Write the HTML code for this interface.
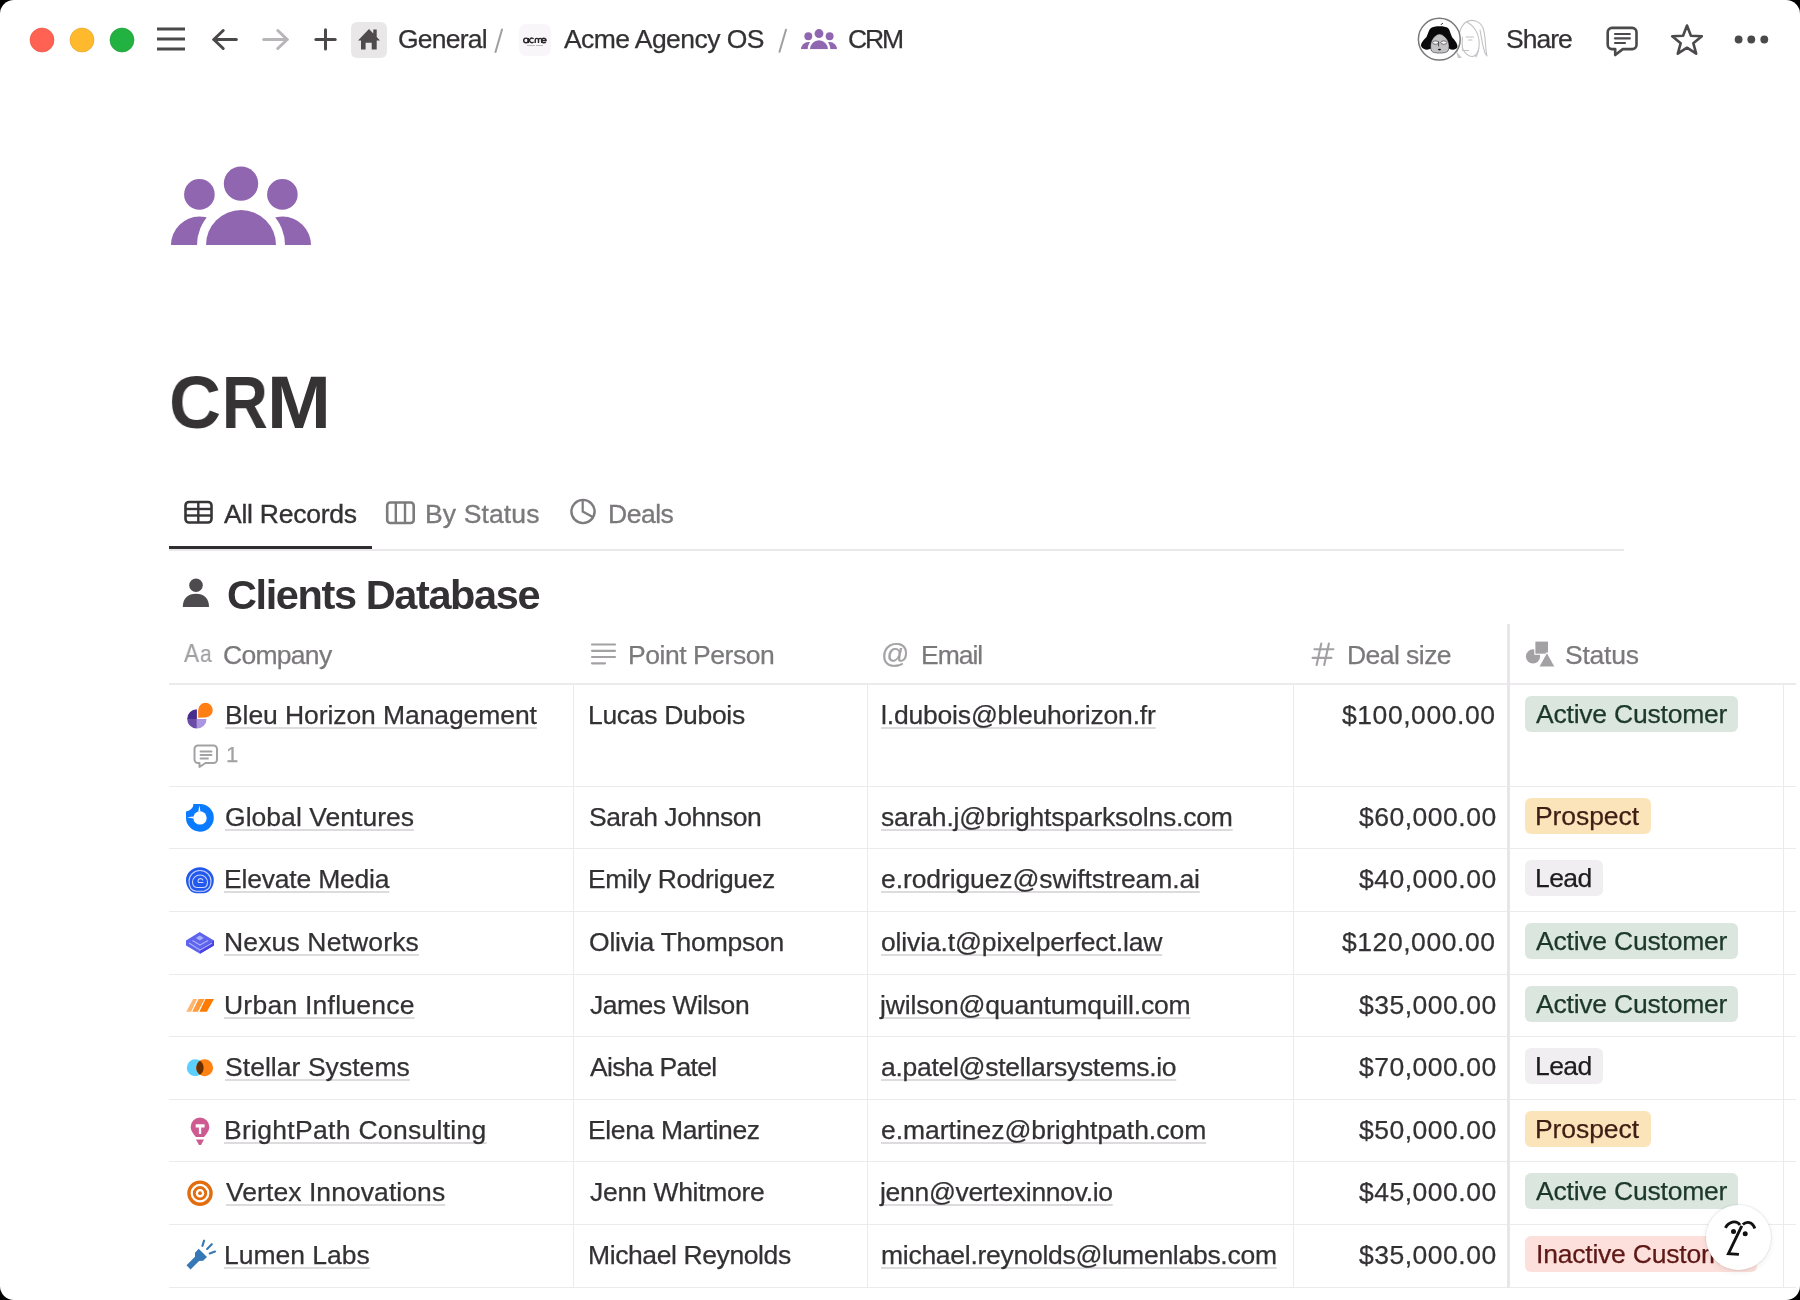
<!DOCTYPE html>
<html><head><meta charset="utf-8"><title>CRM</title>
<style>
html,body{margin:0;padding:0;background:#000;width:1800px;height:1300px;overflow:hidden}
#win{position:absolute;left:0;top:0;width:1800px;height:1300px;background:#fff;border-radius:14px;overflow:hidden}
.t{position:absolute;white-space:nowrap;font-family:"Liberation Sans",sans-serif;will-change:transform}
.u{text-decoration:underline;text-decoration-color:#DDDBDE;text-decoration-thickness:1.5px;text-underline-offset:2.8px;text-decoration-skip-ink:none}
.pill{position:absolute;height:36px;border-radius:6px;font-family:"Liberation Sans",sans-serif;font-size:26.5px;line-height:36px;padding:0 11px;white-space:nowrap}
svg{overflow:visible}
</style></head>
<body><div id="win">
<svg style="position:absolute;left:29px;top:27px;" width="26" height="26" viewBox="0 0 26 26"><circle cx="13" cy="13" r="12" fill="#FF6152" stroke="#E9503F" stroke-width="0.6"/></svg>
<svg style="position:absolute;left:69px;top:27px;" width="26" height="26" viewBox="0 0 26 26"><circle cx="13" cy="13" r="12" fill="#FEBA2C" stroke="#E3A123" stroke-width="0.6"/></svg>
<svg style="position:absolute;left:109px;top:27px;" width="26" height="26" viewBox="0 0 26 26"><circle cx="13" cy="13" r="12" fill="#21B242" stroke="#1A9A36" stroke-width="0.6"/></svg>
<svg style="position:absolute;left:155px;top:25px;" width="34" height="30" viewBox="0 0 34 30"><g stroke="#4A484A" stroke-width="3"><line x1="2" y1="4" x2="30" y2="4"/><line x1="2" y1="14" x2="30" y2="14"/><line x1="2" y1="24" x2="30" y2="24"/></g></svg>
<svg style="position:absolute;left:205px;top:25px;" width="40" height="30" viewBox="0 0 40 30"><g stroke="#4B4849" stroke-width="3" fill="none" stroke-linecap="round" stroke-linejoin="round"><path d="M9 14.5 H31.3"/><path d="M18.2 5.5 L8.8 14.5 L18.2 23.5"/></g></svg>
<svg style="position:absolute;left:255px;top:25px;" width="40" height="30" viewBox="0 0 40 30"><g stroke="#B7B5B7" stroke-width="3" fill="none" stroke-linecap="round" stroke-linejoin="round"><path d="M8.7 14.5 H32"/><path d="M22.8 5.5 L32.2 14.5 L22.8 23.5"/></g></svg>
<svg style="position:absolute;left:310px;top:24px;" width="32" height="32" viewBox="0 0 32 32"><g stroke="#4B4849" stroke-width="3" stroke-linecap="round"><path d="M15.5 5.8 V25.1"/><path d="M5.9 15.5 H25.2"/></g></svg>
<div style="position:absolute;left:351px;top:22px;width:36px;height:36px;background:#EAE7E8;border-radius:6px"></div>
<svg style="position:absolute;left:351px;top:22px;" width="36" height="36" viewBox="0 0 36 36"><path fill="#4F4B4C" d="M18 7 L7 18.5 H10 V27.5 H14.6 V20.8 H20.7 V27.5 H25.7 V18.5 H29 L25.7 15 V7.5 H22.3 V11.5 Z"/></svg>
<div id="t0" class="t " style="left:398.20px;top:25.57px;font-size:26.5px;line-height:26.5px;color:#333133;font-weight:400;;-webkit-text-stroke:0.25px #333133;letter-spacing:-0.769px;">General</div>
<svg style="position:absolute;left:490px;top:25px;" width="16" height="32" viewBox="0 0 16 32"><path d="M12 4.5 L5.5 27" stroke="#A09EA0" stroke-width="2" stroke-linecap="round"/></svg>
<div style="position:absolute;left:519px;top:24px;width:32px;height:32px;background:#F8F6F9;border-radius:7px"></div>
<svg style="position:absolute;left:519px;top:24px" width="32" height="32" viewBox="519 24 32 32"><g fill="none" stroke="#2A282A" stroke-width="1.45"><circle cx="526" cy="40.4" r="2.3"/><path d="M528.3 38 V43.1"/><path d="M533.6 38.9 A2.3 2.3 0 1 0 533.6 41.9"/><path d="M535.2 43.1 V40 A1.65 1.65 0 0 1 538.5 40 V43.1 M538.5 40 A1.65 1.65 0 0 1 541.8 40 V43.1"/><path d="M545.4 41.8 A2.3 2.3 0 1 1 545.8 40.4 H541.7" transform="translate(0.3 0)"/></g></svg>
<div style="position:absolute;left:527px;top:44.5px;width:8px;height:1px;background:#BDBBBD;"></div>
<div style="position:absolute;left:536px;top:44.5px;width:7px;height:1px;background:#BDBBBD;"></div>
<div id="t1" class="t " style="left:564.20px;top:25.57px;font-size:26.5px;line-height:26.5px;color:#333133;font-weight:400;;-webkit-text-stroke:0.25px #333133;letter-spacing:-0.563px;">Acme Agency OS</div>
<svg style="position:absolute;left:775px;top:25px;" width="16" height="32" viewBox="0 0 16 32"><path d="M11 4.7 L4.5 26.7" stroke="#A09EA0" stroke-width="2" stroke-linecap="round"/></svg>
<svg style="position:absolute;left:801px;top:29px;" width="37" height="22" viewBox="0 0 37 22"><g transform="scale(0.257)"><circle cx="28.4" cy="28.4" r="15.3" fill="#9166B0"/><circle cx="111.4" cy="28.4" r="15.3" fill="#9166B0"/><circle cx="70" cy="17.6" r="17.2" fill="#9166B0"/><path d="M0 79 A28.4 28.4 0 0 1 56.8 79 Z" fill="#9166B0"/><path d="M83.2 79 A28.4 28.4 0 0 1 140 79 Z" fill="#9166B0"/><circle cx="70" cy="79" r="44" fill="#fff"/><path d="M35 79 A35 35 0 0 1 105 79 Z" fill="#9166B0"/><rect x="-2" y="79" width="146" height="20" fill="#fff"/></g></svg>
<div id="t2" class="t " style="left:848.20px;top:25.57px;font-size:26.5px;line-height:26.5px;color:#333133;font-weight:400;;-webkit-text-stroke:0.25px #333133;letter-spacing:-2.100px;">CRM</div>
<svg style="position:absolute;left:1410px;top:12px" width="90" height="56" viewBox="1410 12 90 56"><circle cx="1470" cy="39.5" r="19" fill="#fff"/><g fill="none" stroke="#C3C1C4" stroke-width="1.1" stroke-linecap="round"><path d="M1457 52 C1459 40 1458 28 1466 22 C1472 18.5 1480 21 1483 28 C1486 36 1485 48 1487 56"/><path d="M1467 22 C1474 26 1478 32 1479 40 C1480 48 1478 53 1476 57"/><path d="M1462.5 37 C1462 42 1462 47 1463 49.5"/><path d="M1463 49.5 C1465 53 1468 56.5 1472 56.5 C1475 56.5 1477 54 1478 51"/><path d="M1466 37 H1473.5"/><path d="M1468.5 40 H1472"/><path d="M1462.5 50.5 H1468.5"/><path d="M1480 30 C1482 40 1483 50 1486 55"/></g><path d="M1456 51 L1462 58 L1458 58 Z" fill="#C9C7CA"/></svg>
<svg style="position:absolute;left:1410px;top:12px" width="90" height="56" viewBox="1410 12 90 56"><circle cx="1439.3" cy="39.2" r="20.9" fill="#fff" stroke="#7B797B" stroke-width="1.5"/><path d="M1421 46 C1421 42 1424 40 1426.5 37 C1428 34 1428.5 30 1431 28 C1434 25.5 1445 25.5 1448 28 C1450 30 1450.5 34 1452 37 C1454.5 40 1457.5 43 1457.5 47 C1456 50 1452 50.5 1449 48.5 L1431 48.5 C1428 50.5 1423 50 1421 46 Z" fill="#0B0A0B"/><path d="M1432 40 C1433.5 37 1437 34 1439.5 34 C1442 34 1445.5 37 1447.5 40 C1449.5 44 1449.5 48 1448 51 C1446 53.8 1433 53.8 1431.5 51 C1430 48 1430.5 43 1432 40 Z" fill="#C4C2C5" stroke="#111" stroke-width="0.5"/><ellipse cx="1435.6" cy="42.6" rx="3" ry="1.7" fill="#F4F4F4" stroke="#333" stroke-width="0.6"/><ellipse cx="1443.8" cy="42.6" rx="3" ry="1.7" fill="#F4F4F4" stroke="#333" stroke-width="0.6"/><path d="M1438.6 41.5 V46.5" stroke="#222" stroke-width="0.7"/><ellipse cx="1439.5" cy="49.6" rx="1.6" ry="0.8" fill="#111"/><path d="M1441 24.8 L1442.8 23" stroke="#111" stroke-width="1"/></svg>
<div id="t3" class="t " style="left:1506.00px;top:25.57px;font-size:26.5px;line-height:26.5px;color:#333133;font-weight:400;;-webkit-text-stroke:0.25px #333133;letter-spacing:-1.000px;">Share</div>
<svg style="position:absolute;left:1603px;top:23px;" width="40" height="36" viewBox="0 0 40 36"><path d="M9 4.9 H29.2 A4.3 4.3 0 0 1 33.5 9.2 V21.8 A4.3 4.3 0 0 1 29.2 26.1 H19.8 L12.2 32 V26.1 H9 A4.3 4.3 0 0 1 4.7 21.8 V9.2 A4.3 4.3 0 0 1 9 4.9 Z" fill="none" stroke="#4B494B" stroke-width="2.6" stroke-linejoin="round"/><g stroke="#4B494B" stroke-width="2.2" stroke-linecap="round"><path d="M12 11 H26.8"/><path d="M12 15.4 H26.8"/><path d="M12 20 H22"/></g></svg>
<svg style="position:absolute;left:1668px;top:21px;" width="38" height="37" viewBox="0 0 38 37"><path d="M19 4.5 L22.9 14.8 L33.8 15.3 L25.3 22.2 L28.2 32.7 L19 26.7 L9.8 32.7 L12.7 22.2 L4.2 15.3 L15.1 14.8 Z" fill="none" stroke="#4B494B" stroke-width="2.6" stroke-linejoin="round"/></svg>
<svg style="position:absolute;left:1730px;top:31px;" width="42" height="17" viewBox="0 0 42 17"><g fill="#4B494B"><circle cx="8.6" cy="8.5" r="3.9"/><circle cx="21.3" cy="8.5" r="3.9"/><circle cx="34.3" cy="8.5" r="3.9"/></g></svg>
<svg style="position:absolute;left:171px;top:166px;" width="142" height="82" viewBox="0 0 142 82"><g transform="scale(1.0)"><circle cx="28.4" cy="28.4" r="15.3" fill="#9166B0"/><circle cx="111.4" cy="28.4" r="15.3" fill="#9166B0"/><circle cx="70" cy="17.6" r="17.2" fill="#9166B0"/><path d="M0 79 A28.4 28.4 0 0 1 56.8 79 Z" fill="#9166B0"/><path d="M83.2 79 A28.4 28.4 0 0 1 140 79 Z" fill="#9166B0"/><circle cx="70" cy="79" r="44" fill="#fff"/><path d="M35 79 A35 35 0 0 1 105 79 Z" fill="#9166B0"/><rect x="-2" y="79" width="146" height="20" fill="#fff"/></g></svg>
<div id="t4" class="t " style="left:168.53px;top:364.51px;font-size:75px;line-height:75px;color:#353334;font-weight:700;;transform:scaleX(0.9590);transform-origin:0 0;">C</div>
<div id="t5" class="t " style="left:221.88px;top:364.51px;font-size:75px;line-height:75px;color:#353334;font-weight:700;;transform:scaleX(0.8460);transform-origin:0 0;">R</div>
<div id="t6" class="t " style="left:267.41px;top:364.51px;font-size:75px;line-height:75px;color:#353334;font-weight:700;;transform:scaleX(1.0230);transform-origin:0 0;">M</div>
<svg style="position:absolute;left:182px;top:498px;" width="32" height="28" viewBox="0 0 32 28"><rect x="3.5" y="4" width="26" height="20.5" rx="3.5" fill="none" stroke="#373537" stroke-width="2.6"/><g stroke="#373537" stroke-width="2.4"><path d="M3.5 11 H29.5"/><path d="M3.5 17.5 H29.5"/><path d="M16.3 4 V24.5"/></g></svg>
<div id="t7" class="t " style="left:224.20px;top:500.57px;font-size:26.5px;line-height:26.5px;color:#333133;font-weight:400;-webkit-text-stroke:0.35px #333133;letter-spacing:-0.240px;">All Records</div>
<svg style="position:absolute;left:384px;top:498px;" width="34" height="28" viewBox="0 0 34 28"><rect x="3.2" y="4.5" width="26.5" height="20.5" rx="3" fill="none" stroke="#7D7B7D" stroke-width="2.6"/><g stroke="#7D7B7D" stroke-width="2.4"><path d="M11.8 4.5 V25"/><path d="M21 4.5 V25"/></g></svg>
<div id="t8" class="t " style="left:425.00px;top:500.57px;font-size:26.5px;line-height:26.5px;color:#7B797B;font-weight:400;-webkit-text-stroke:0.35px #7B797B;letter-spacing:0.121px;">By Status</div>
<svg style="position:absolute;left:568px;top:497px;" width="30" height="30" viewBox="0 0 30 30"><circle cx="15" cy="14.5" r="11.6" fill="none" stroke="#7D7B7D" stroke-width="2.4"/><path d="M14.7 3 V14.5 L24.8 20" fill="none" stroke="#7D7B7D" stroke-width="2.2"/></svg>
<div id="t9" class="t " style="left:608.00px;top:500.57px;font-size:26.5px;line-height:26.5px;color:#7B797B;font-weight:400;-webkit-text-stroke:0.35px #7B797B;letter-spacing:-0.475px;">Deals</div>
<div style="position:absolute;left:169px;top:546px;width:203px;height:3px;background:#2F2D2F;"></div>
<div style="position:absolute;left:169px;top:549px;width:1455px;height:2px;background:#EAE8EB;"></div>
<svg style="position:absolute;left:180px;top:576px;" width="32" height="34" viewBox="0 0 32 34"><circle cx="16" cy="9.2" r="6.8" fill="#4D4B4D"/><path d="M2.8 31 C2.8 22 8.5 17.8 16 17.8 C23.5 17.8 29 22 29 31 Z" fill="#4D4B4D"/></svg>
<div id="t10" class="t " style="left:226.80px;top:573.87px;font-size:41.5px;line-height:41.5px;color:#333133;font-weight:700;;letter-spacing:-1.395px;">Clients Database</div>
<div id="t11" class="t " style="left:184.21px;top:640.94px;font-size:25.7px;line-height:25.7px;color:#A09EA2;font-weight:400;-webkit-text-stroke:0.2px #A09EA2;transform:scaleX(0.8820);transform-origin:0 0;">A</div>
<div id="t12" class="t " style="left:200.15px;top:641.71px;font-size:24.8px;line-height:24.8px;color:#A09EA2;font-weight:400;-webkit-text-stroke:0.2px #A09EA2;transform:scaleX(0.8460);transform-origin:0 0;">a</div>
<div id="t13" class="t " style="left:222.80px;top:641.57px;font-size:26.5px;line-height:26.5px;color:#7B797B;font-weight:400;;-webkit-text-stroke:0.25px #7B797B;letter-spacing:-0.713px;">Company</div>
<svg style="position:absolute;left:588px;top:640px;" width="30" height="28" viewBox="0 0 30 28"><g stroke="#A3A1A4" stroke-width="2.2" stroke-linecap="round"><path d="M4 4.5 H27"/><path d="M4 10.8 H27"/><path d="M4 17 H27"/><path d="M4 23.3 H17"/></g></svg>
<div id="t14" class="t " style="left:628.00px;top:641.57px;font-size:26.5px;line-height:26.5px;color:#7B797B;font-weight:400;;-webkit-text-stroke:0.25px #7B797B;letter-spacing:-0.450px;">Point Person</div>
<div id="t15" class="t " style="left:881.00px;top:640.30px;font-size:28px;line-height:28px;color:#A3A1A4;font-weight:400;;-webkit-text-stroke:0.25px #A3A1A4;transform:scaleX(1.0000);transform-origin:0 0;">@</div>
<div id="t16" class="t " style="left:921.40px;top:641.57px;font-size:26.5px;line-height:26.5px;color:#7B797B;font-weight:400;;-webkit-text-stroke:0.25px #7B797B;letter-spacing:-1.025px;">Email</div>
<svg style="position:absolute;left:1308px;top:638px" width="30" height="32" viewBox="1308 638 30 32"><g stroke="#A3A1A4" stroke-width="2.1" stroke-linecap="round"><path d="M1321.3 643.5 L1316.6 665"/><path d="M1328.9 643.5 L1324.2 665"/><path d="M1314.4 649.2 H1333.4"/><path d="M1312.6 657.9 H1331.4"/></g></svg>
<div id="t17" class="t " style="left:1347.40px;top:641.57px;font-size:26.5px;line-height:26.5px;color:#7B797B;font-weight:400;;-webkit-text-stroke:0.25px #7B797B;letter-spacing:-0.550px;">Deal size</div>
<svg style="position:absolute;left:1522px;top:636px" width="36" height="34" viewBox="1522 636 36 34"><circle cx="1533" cy="656.4" r="7.1" fill="#A3A1A4"/><rect x="1535.4" y="641.6" width="12.6" height="12.1" fill="#A3A1A4" stroke="#fff" stroke-width="2.2" paint-order="stroke"/><path d="M1546.9 653.3 L1554.3 666.5 H1539.6 Z" fill="#A3A1A4" stroke="#fff" stroke-width="2.2" stroke-linejoin="round" paint-order="stroke"/></svg>
<div id="t18" class="t " style="left:1564.60px;top:641.57px;font-size:26.5px;line-height:26.5px;color:#7B797B;font-weight:400;;-webkit-text-stroke:0.25px #7B797B;letter-spacing:-0.220px;">Status</div>
<div style="position:absolute;left:169px;top:683px;width:1627px;height:2px;background:#ECEAED;"></div>
<div style="position:absolute;left:169px;top:786px;width:1627px;height:1px;background:#ECEAED;"></div>
<div style="position:absolute;left:169px;top:848px;width:1627px;height:1px;background:#ECEAED;"></div>
<div style="position:absolute;left:169px;top:911px;width:1627px;height:1px;background:#ECEAED;"></div>
<div style="position:absolute;left:169px;top:974px;width:1627px;height:1px;background:#ECEAED;"></div>
<div style="position:absolute;left:169px;top:1036px;width:1627px;height:1px;background:#ECEAED;"></div>
<div style="position:absolute;left:169px;top:1099px;width:1627px;height:1px;background:#ECEAED;"></div>
<div style="position:absolute;left:169px;top:1161px;width:1627px;height:1px;background:#ECEAED;"></div>
<div style="position:absolute;left:169px;top:1224px;width:1627px;height:1px;background:#ECEAED;"></div>
<div style="position:absolute;left:169px;top:1287px;width:1627px;height:1px;background:#ECEAED;"></div>
<div style="position:absolute;left:573px;top:685px;width:1px;height:603px;background:#ECEAED;"></div>
<div style="position:absolute;left:867px;top:685px;width:1px;height:603px;background:#ECEAED;"></div>
<div style="position:absolute;left:1293px;top:685px;width:1px;height:603px;background:#ECEAED;"></div>
<div style="position:absolute;left:1783px;top:685px;width:1px;height:603px;background:#ECEAED;"></div>
<div style="position:absolute;left:1507px;top:624px;width:3px;height:664px;background:#E8E6E9;"></div>
<div id="t19" class="t u" style="left:224.60px;top:701.57px;font-size:26.5px;line-height:26.5px;color:#333133;font-weight:400;;-webkit-text-stroke:0.25px #333133;letter-spacing:-0.083px;">Bleu Horizon Management</div>
<div id="t20" class="t " style="left:587.80px;top:701.57px;font-size:26.5px;line-height:26.5px;color:#333133;font-weight:400;;-webkit-text-stroke:0.25px #333133;letter-spacing:-0.306px;">Lucas Dubois</div>
<div id="t21" class="t u" style="left:881.20px;top:701.57px;font-size:26.5px;line-height:26.5px;color:#333133;font-weight:400;;-webkit-text-stroke:0.25px #333133;letter-spacing:-0.181px;">l.dubois@bleuhorizon.fr</div>
<div id="t22" class="t " style="left:1342.20px;top:701.57px;font-size:26.5px;line-height:26.5px;color:#333133;font-weight:400;;-webkit-text-stroke:0.25px #333133;letter-spacing:0.560px;">$100,000.00</div>
<div style="position:absolute;left:1525px;top:696px;width:213px;height:36px;background:#DBE6DE;border-radius:6px"></div>
<div id="t23" class="t " style="left:1536.00px;top:700.57px;font-size:26.5px;line-height:26.5px;color:#1C3829;font-weight:400;;-webkit-text-stroke:0.25px #1C3829;letter-spacing:-0.214px;">Active Customer</div>
<div id="t24" class="t u" style="left:224.80px;top:803.57px;font-size:26.5px;line-height:26.5px;color:#333133;font-weight:400;;-webkit-text-stroke:0.25px #333133;letter-spacing:0.036px;">Global Ventures</div>
<div id="t25" class="t " style="left:588.80px;top:803.57px;font-size:26.5px;line-height:26.5px;color:#333133;font-weight:400;;-webkit-text-stroke:0.25px #333133;letter-spacing:-0.453px;">Sarah Johnson</div>
<div id="t26" class="t u" style="left:881.20px;top:803.57px;font-size:26.5px;line-height:26.5px;color:#333133;font-weight:400;;-webkit-text-stroke:0.25px #333133;letter-spacing:-0.181px;">sarah.j@brightsparksolns.com</div>
<div id="t27" class="t " style="left:1358.60px;top:803.57px;font-size:26.5px;line-height:26.5px;color:#333133;font-weight:400;;-webkit-text-stroke:0.25px #333133;letter-spacing:0.500px;">$60,000.00</div>
<div style="position:absolute;left:1525px;top:798px;width:126px;height:36px;background:#FCE4BA;border-radius:6px"></div>
<div id="t28" class="t " style="left:1534.60px;top:802.57px;font-size:26.5px;line-height:26.5px;color:#3F1F15;font-weight:400;;-webkit-text-stroke:0.25px #3F1F15;letter-spacing:-0.071px;">Prospect</div>
<div id="t29" class="t u" style="left:223.80px;top:865.57px;font-size:26.5px;line-height:26.5px;color:#333133;font-weight:400;;-webkit-text-stroke:0.25px #333133;letter-spacing:-0.203px;">Elevate Media</div>
<div id="t30" class="t " style="left:587.80px;top:865.57px;font-size:26.5px;line-height:26.5px;color:#333133;font-weight:400;;-webkit-text-stroke:0.25px #333133;letter-spacing:-0.403px;">Emily Rodriguez</div>
<div id="t31" class="t u" style="left:881.20px;top:865.57px;font-size:26.5px;line-height:26.5px;color:#333133;font-weight:400;;-webkit-text-stroke:0.25px #333133;letter-spacing:-0.100px;">e.rodriguez@swiftstream.ai</div>
<div id="t32" class="t " style="left:1358.60px;top:865.57px;font-size:26.5px;line-height:26.5px;color:#333133;font-weight:400;;-webkit-text-stroke:0.25px #333133;letter-spacing:0.500px;">$40,000.00</div>
<div style="position:absolute;left:1525px;top:860px;width:78px;height:36px;background:#F0EEF1;border-radius:6px"></div>
<div id="t33" class="t " style="left:1534.60px;top:864.57px;font-size:26.5px;line-height:26.5px;color:#1E1C1E;font-weight:400;;-webkit-text-stroke:0.25px #1E1C1E;letter-spacing:-0.598px;">Lead</div>
<div id="t34" class="t u" style="left:223.80px;top:928.57px;font-size:26.5px;line-height:26.5px;color:#333133;font-weight:400;;-webkit-text-stroke:0.25px #333133;letter-spacing:0.148px;">Nexus Networks</div>
<div id="t35" class="t " style="left:588.80px;top:928.57px;font-size:26.5px;line-height:26.5px;color:#333133;font-weight:400;;-webkit-text-stroke:0.25px #333133;letter-spacing:-0.217px;">Olivia Thompson</div>
<div id="t36" class="t u" style="left:881.20px;top:928.57px;font-size:26.5px;line-height:26.5px;color:#333133;font-weight:400;;-webkit-text-stroke:0.25px #333133;letter-spacing:-0.135px;">olivia.t@pixelperfect.law</div>
<div id="t37" class="t " style="left:1342.20px;top:928.57px;font-size:26.5px;line-height:26.5px;color:#333133;font-weight:400;;-webkit-text-stroke:0.25px #333133;letter-spacing:0.560px;">$120,000.00</div>
<div style="position:absolute;left:1525px;top:923px;width:213px;height:36px;background:#DBE6DE;border-radius:6px"></div>
<div id="t38" class="t " style="left:1536.00px;top:927.57px;font-size:26.5px;line-height:26.5px;color:#1C3829;font-weight:400;;-webkit-text-stroke:0.25px #1C3829;letter-spacing:-0.214px;">Active Customer</div>
<div id="t39" class="t u" style="left:223.80px;top:991.57px;font-size:26.5px;line-height:26.5px;color:#333133;font-weight:400;;-webkit-text-stroke:0.25px #333133;letter-spacing:0.236px;">Urban Influence</div>
<div id="t40" class="t " style="left:589.80px;top:991.57px;font-size:26.5px;line-height:26.5px;color:#333133;font-weight:400;;-webkit-text-stroke:0.25px #333133;letter-spacing:-0.483px;">James Wilson</div>
<div id="t41" class="t u" style="left:880.00px;top:991.57px;font-size:26.5px;line-height:26.5px;color:#333133;font-weight:400;;-webkit-text-stroke:0.25px #333133;letter-spacing:-0.151px;">jwilson@quantumquill.com</div>
<div id="t42" class="t " style="left:1358.60px;top:991.57px;font-size:26.5px;line-height:26.5px;color:#333133;font-weight:400;;-webkit-text-stroke:0.25px #333133;letter-spacing:0.500px;">$35,000.00</div>
<div style="position:absolute;left:1525px;top:986px;width:213px;height:36px;background:#DBE6DE;border-radius:6px"></div>
<div id="t43" class="t " style="left:1536.00px;top:990.57px;font-size:26.5px;line-height:26.5px;color:#1C3829;font-weight:400;;-webkit-text-stroke:0.25px #1C3829;letter-spacing:-0.214px;">Active Customer</div>
<div id="t44" class="t u" style="left:224.80px;top:1053.57px;font-size:26.5px;line-height:26.5px;color:#333133;font-weight:400;;-webkit-text-stroke:0.25px #333133;letter-spacing:0.050px;">Stellar Systems</div>
<div id="t45" class="t " style="left:589.80px;top:1053.57px;font-size:26.5px;line-height:26.5px;color:#333133;font-weight:400;;-webkit-text-stroke:0.25px #333133;letter-spacing:-0.700px;">Aisha Patel</div>
<div id="t46" class="t u" style="left:881.20px;top:1053.57px;font-size:26.5px;line-height:26.5px;color:#333133;font-weight:400;;-webkit-text-stroke:0.25px #333133;letter-spacing:-0.281px;">a.patel@stellarsystems.io</div>
<div id="t47" class="t " style="left:1358.60px;top:1053.57px;font-size:26.5px;line-height:26.5px;color:#333133;font-weight:400;;-webkit-text-stroke:0.25px #333133;letter-spacing:0.500px;">$70,000.00</div>
<div style="position:absolute;left:1525px;top:1048px;width:78px;height:36px;background:#F0EEF1;border-radius:6px"></div>
<div id="t48" class="t " style="left:1534.60px;top:1052.57px;font-size:26.5px;line-height:26.5px;color:#1E1C1E;font-weight:400;;-webkit-text-stroke:0.25px #1E1C1E;letter-spacing:-0.598px;">Lead</div>
<div id="t49" class="t u" style="left:223.80px;top:1116.57px;font-size:26.5px;line-height:26.5px;color:#333133;font-weight:400;;-webkit-text-stroke:0.25px #333133;letter-spacing:0.300px;">BrightPath Consulting</div>
<div id="t50" class="t " style="left:587.80px;top:1116.57px;font-size:26.5px;line-height:26.5px;color:#333133;font-weight:400;;-webkit-text-stroke:0.25px #333133;letter-spacing:-0.360px;">Elena Martinez</div>
<div id="t51" class="t u" style="left:881.20px;top:1116.57px;font-size:26.5px;line-height:26.5px;color:#333133;font-weight:400;;-webkit-text-stroke:0.25px #333133;letter-spacing:-0.029px;">e.martinez@brightpath.com</div>
<div id="t52" class="t " style="left:1358.60px;top:1116.57px;font-size:26.5px;line-height:26.5px;color:#333133;font-weight:400;;-webkit-text-stroke:0.25px #333133;letter-spacing:0.500px;">$50,000.00</div>
<div style="position:absolute;left:1525px;top:1111px;width:126px;height:36px;background:#FCE4BA;border-radius:6px"></div>
<div id="t53" class="t " style="left:1534.60px;top:1115.57px;font-size:26.5px;line-height:26.5px;color:#3F1F15;font-weight:400;;-webkit-text-stroke:0.25px #3F1F15;letter-spacing:-0.071px;">Prospect</div>
<div id="t54" class="t u" style="left:225.80px;top:1178.57px;font-size:26.5px;line-height:26.5px;color:#333133;font-weight:400;;-webkit-text-stroke:0.25px #333133;letter-spacing:0.065px;">Vertex Innovations</div>
<div id="t55" class="t " style="left:589.80px;top:1178.57px;font-size:26.5px;line-height:26.5px;color:#333133;font-weight:400;;-webkit-text-stroke:0.25px #333133;letter-spacing:-0.279px;">Jenn Whitmore</div>
<div id="t56" class="t u" style="left:880.00px;top:1178.57px;font-size:26.5px;line-height:26.5px;color:#333133;font-weight:400;;-webkit-text-stroke:0.25px #333133;letter-spacing:-0.306px;">jenn@vertexinnov.io</div>
<div id="t57" class="t " style="left:1358.60px;top:1178.57px;font-size:26.5px;line-height:26.5px;color:#333133;font-weight:400;;-webkit-text-stroke:0.25px #333133;letter-spacing:0.500px;">$45,000.00</div>
<div style="position:absolute;left:1525px;top:1173px;width:213px;height:36px;background:#DBE6DE;border-radius:6px"></div>
<div id="t58" class="t " style="left:1536.00px;top:1177.57px;font-size:26.5px;line-height:26.5px;color:#1C3829;font-weight:400;;-webkit-text-stroke:0.25px #1C3829;letter-spacing:-0.214px;">Active Customer</div>
<div id="t59" class="t u" style="left:223.80px;top:1241.57px;font-size:26.5px;line-height:26.5px;color:#333133;font-weight:400;;-webkit-text-stroke:0.25px #333133;letter-spacing:-0.006px;">Lumen Labs</div>
<div id="t60" class="t " style="left:587.80px;top:1241.57px;font-size:26.5px;line-height:26.5px;color:#333133;font-weight:400;;-webkit-text-stroke:0.25px #333133;letter-spacing:-0.400px;">Michael Reynolds</div>
<div id="t61" class="t u" style="left:881.20px;top:1241.57px;font-size:26.5px;line-height:26.5px;color:#333133;font-weight:400;;-webkit-text-stroke:0.25px #333133;letter-spacing:-0.276px;">michael.reynolds@lumenlabs.com</div>
<div id="t62" class="t " style="left:1358.60px;top:1241.57px;font-size:26.5px;line-height:26.5px;color:#333133;font-weight:400;;-webkit-text-stroke:0.25px #333133;letter-spacing:0.500px;">$35,000.00</div>
<div style="position:absolute;left:1525px;top:1236px;width:232px;height:36px;background:#FDE0DC;border-radius:6px"></div>
<div id="t63" class="t " style="left:1536.00px;top:1240.57px;font-size:26.5px;line-height:26.5px;color:#5D1715;font-weight:400;;-webkit-text-stroke:0.25px #5D1715;letter-spacing:-0.214px;">Inactive Customer</div>
<svg style="position:absolute;left:191px;top:742px;" width="30" height="28" viewBox="0 0 30 28"><path d="M7 3.5 H22.5 A3.5 3.5 0 0 1 26 7 V17.5 A3.5 3.5 0 0 1 22.5 21 H14.5 L8.5 25 V21 H7 A3.5 3.5 0 0 1 3.5 17.5 V7 A3.5 3.5 0 0 1 7 3.5 Z" fill="none" stroke="#A3A1A4" stroke-width="2" stroke-linejoin="round"/><g stroke="#A3A1A4" stroke-width="1.8" stroke-linecap="round"><path d="M9.5 9.5 H20.5"/><path d="M9.5 13 H20.5"/><path d="M9.5 16.5 H17"/></g></svg>
<div id="t64" class="t " style="left:226.00px;top:744.38px;font-size:22px;line-height:22px;color:#A3A1A4;font-weight:400;;-webkit-text-stroke:0.25px #A3A1A4;transform:scaleX(1.0000);transform-origin:0 0;">1</div>
<svg style="position:absolute;left:184px;top:700px" width="32" height="32" viewBox="184 700 32 32"><path d="M196.9 709.2 A9.7 9.7 0 0 0 187.2 718.9 H196.9 Z" fill="#472D8C"/><path d="M187.2 718.9 A9.7 9.7 0 0 0 196.9 728.6 V718.9 Z" fill="#6A4CA6"/><path d="M196.9 728.6 A9.7 9.7 0 0 0 206.6 718.9 H196.9 Z" fill="#AC95E0"/><path d="M198.2 717.7 V710.1 A7.3 7.3 0 1 1 205.5 717.4 Z" fill="#FF7F14"/></svg>
<svg style="position:absolute;left:184px;top:801px" width="32" height="34" viewBox="184 801 32 34"><path d="M200 803.9 A13.9 13.9 0 1 1 186 817.8 L186 811.4 Q191.5 810.3 193.2 806 L193.2 803.9 Z" fill="#0A7AFF"/><circle cx="200" cy="817.9" r="6.7" fill="#fff"/><path d="M198.3 811.8 L199.4 805.3 L200.4 811.3 Z" fill="#fff"/><path d="M193.8 816.6 L187 817.3 L193.6 818.6 Z" fill="#fff"/></svg>
<svg style="position:absolute;left:184px;top:864px" width="32" height="32" viewBox="184 864 32 32"><path d="M186 880.3 A13.9 13 0 0 1 213.8 880.3 C213.8 886 210 893.2 204 893.2 H196 C190 893.2 186 886 186 880.3 Z" fill="#2358EC"/><g fill="none" stroke="#C9D5FB" stroke-width="1.1"><path d="M196 891.2 C190.5 890.5 189 885 189 881 A11 10.5 0 0 1 211 881 C211 886 209 890 204 891.2 Z"/><path d="M197 887.5 C193.5 887 192.5 884 192.5 882 A7.5 7 0 0 1 207.5 882 C207.5 885 206 887.5 203 887.5 Z"/><path d="M203.5 882.5 H198.5 C197.5 881 198 879 200 878.6 C202 878.5 203 879.5 202.8 880.5"/></g></svg>
<svg style="position:absolute;left:184px;top:928px" width="32" height="30" viewBox="184 928 32 30"><path d="M199.7 932 L214 940.5 V945.5 L200 953.8 L186 945.5 V940.5 Z" fill="#5E64EE"/><path d="M200 953.8 L214 945.5 V940.5 L200 949 Z" fill="#4A42E6"/><g fill="none" stroke="#A8AFFA" stroke-width="1.3"><path d="M189 943 L200 950 L212 943"/><path d="M192.5 940.5 L200 945 L208 940.5"/></g><path d="M199.8 935.5 L203.8 938 L199.8 940.5 L195.8 938 Z" fill="#A8AFFA"/></svg>
<svg style="position:absolute;left:184px;top:996px" width="32" height="18" viewBox="184 996 32 18"><path d="M193.2 999 H197.1 L191.1 1011.8 H186.2 Z" fill="#FFB56F"/><path d="M198.6 999 H204.6 L197.8 1011.8 H192.3 Z" fill="#FF9A3A"/><path d="M205.5 999 H214 L206.8 1011.8 H199.4 Z" fill="#FF7A00"/></svg>
<svg style="position:absolute;left:184px;top:1056px" width="32" height="24" viewBox="184 1056 32 24"><circle cx="195.3" cy="1067.7" r="8.5" fill="#5BD0FF"/><circle cx="204.6" cy="1067.7" r="8.5" fill="#FF8112"/><path d="M199.95 1060.7 A8.5 8.5 0 0 1 199.95 1074.7 A8.5 8.5 0 0 1 199.95 1060.7 Z" fill="#6A2E00"/></svg>
<svg style="position:absolute;left:184px;top:1114px" width="32" height="34" viewBox="184 1114 32 34"><path d="M200 1117.5 A9.3 9.3 0 0 1 209.3 1126.8 C209.3 1131 206.5 1134 204 1137.1 H196 C193.5 1134 190.7 1131 190.7 1126.8 A9.3 9.3 0 0 1 200 1117.5 Z" fill="#CE5A92"/><path d="M196 1139.4 H204 L201 1144.9 H199 Z" fill="#CE5A92"/><path d="M195.7 1124.3 H204.6 V1127.4 H201.2 V1134 H198.9 V1127.4 H195.7 Z" fill="#fff"/></svg>
<svg style="position:absolute;left:184px;top:1177px" width="32" height="32" viewBox="184 1177 32 32"><circle cx="200" cy="1193.2" r="11.05" fill="none" stroke="#E26D0F" stroke-width="3.4"/><circle cx="200" cy="1193.2" r="5.7" fill="none" stroke="#E26D0F" stroke-width="2.9"/><circle cx="200" cy="1193.2" r="1.9" fill="#E26D0F"/></svg>
<svg style="position:absolute;left:182px;top:1236px" width="36" height="36" viewBox="182 1236 36 36"><path d="M186.5 1265.2 L195 1256.7 V1252.7 L198.7 1248.8 L207 1256.9 L203.1 1260.8 L199 1261.1 L190.5 1269.6 Z" fill="#3578B5"/><g stroke="#3578B5" stroke-width="2.1" stroke-linecap="round"><path d="M202.4 1245.9 L204.1 1240.7"/><path d="M207.1 1249 L211.8 1244.2"/><path d="M209.7 1253.4 L215 1251.6"/></g></svg>
<div style="position:absolute;left:1706px;top:1205px;width:65px;height:65px;border-radius:50%;background:#fff;box-shadow:0 0 0 1px rgba(0,0,0,0.06),0 2px 6px rgba(0,0,0,0.08)"></div>
<svg style="position:absolute;left:1706px;top:1205px;" width="65" height="65" viewBox="0 0 65 65"><g fill="none" stroke="#111" stroke-width="2.9" stroke-linecap="butt"><path d="M19.4 22.9 C22.5 17 30 14.5 34 20"/><path d="M36.8 19.5 C40.5 16 46.5 16.5 48.8 23.5"/><path d="M35.8 20.8 L22.4 48.6 L32.9 49.4"/></g><g fill="#111"><circle cx="27.5" cy="26.5" r="2.5"/><circle cx="39.2" cy="28.7" r="2.5"/></g></svg>
</div></body></html>
